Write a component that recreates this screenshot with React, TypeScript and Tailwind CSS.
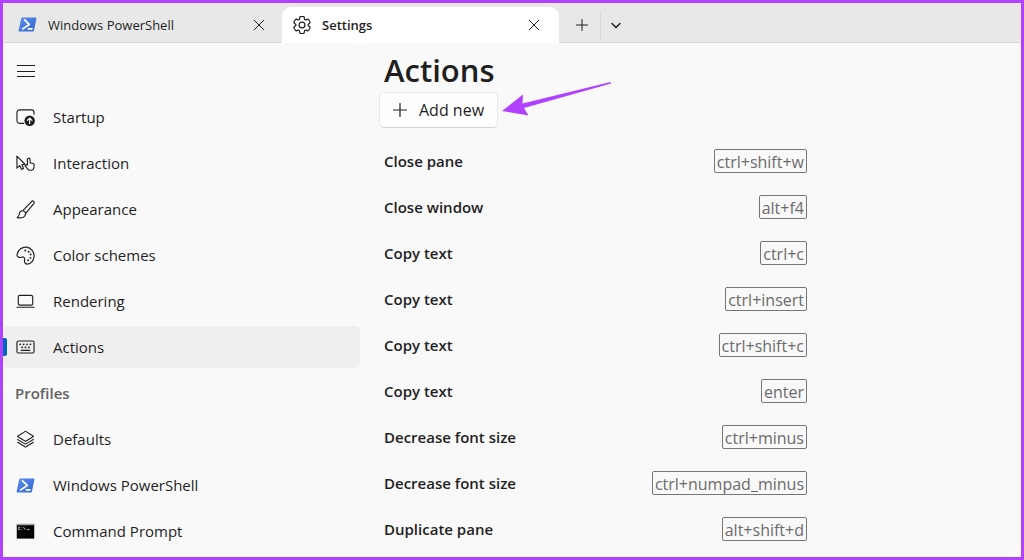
import React from "react";

type IconProps = { className?: string };

const line = {
  fill: "none",
  stroke: "currentColor",
  strokeWidth: 1.2,
  strokeLinecap: "round" as const,
  strokeLinejoin: "round" as const,
};

const GearIcon = ({ className }: IconProps) => (
  <svg viewBox="0 0 20 20" className={className} {...line} aria-hidden="true">
    <path d="M1.91 7.38A8.5 8.5 0 0 1 3.69 4.3a.5.5 0 0 1 .54-.13l1.92.68a1 1 0 0 0 1.32-.76l.36-2a.5.5 0 0 1 .4-.4 8.53 8.53 0 0 1 3.55 0c.2.04.35.2.38.4l.37 2a1 1 0 0 0 1.32.76l1.92-.68a.5.5 0 0 1 .54.13 8.5 8.5 0 0 1 1.78 3.08c.06.2 0 .4-.15.54l-1.56 1.32a1 1 0 0 0 0 1.52l1.56 1.32a.5.5 0 0 1 .15.54 8.5 8.5 0 0 1-1.78 3.08.5.5 0 0 1-.54.13l-1.92-.68a1 1 0 0 0-1.32.76l-.37 2a.5.5 0 0 1-.38.4 8.53 8.53 0 0 1-3.56 0 .5.5 0 0 1-.39-.4l-.36-2a1 1 0 0 0-1.32-.76l-1.92.68a.5.5 0 0 1-.54-.13 8.5 8.5 0 0 1-1.78-3.08.5.5 0 0 1 .15-.54l1.56-1.32a1 1 0 0 0 0-1.52L2.06 7.92a.5.5 0 0 1-.15-.54Z" />
    <circle cx="10" cy="10" r="2.9" />
  </svg>
);

const PowerShellIcon = ({ className }: IconProps) => (
  <svg viewBox="0 0 20 20" className={className} aria-hidden="true">
    <defs>
      <linearGradient id="ps" x1="0" y1="0" x2="1" y2="1">
        <stop offset="0" stopColor="#5a8df0" />
        <stop offset="1" stopColor="#3268cc" />
      </linearGradient>
    </defs>
    <path d="M4.600 2.600h14a.8.8 0 0 1 .8 1l-2.600 12.800a1.200 1.200 0 0 1-1.200 1H1.400a.8.8 0 0 1-.8-1L3.400 3.600a1.200 1.200 0 0 1 1.200-1Z" fill="url(#ps)" />
    <path d="M6.900 5.200l4.900 4.700-6.800 4.700M11 14.600h3.600" fill="none" stroke="#fff" strokeWidth="1.900" strokeLinecap="round" strokeLinejoin="round" />
  </svg>
);

const StartupIcon = ({ className }: IconProps) => (
  <svg viewBox="0 0 20 20" className={className} {...line} aria-hidden="true">
    <path d="M8 16.200H4A3 3 0 0 1 1 13.200V5a3 3 0 0 1 3-3h12a3 3 0 0 1 3 3v1.500" />
    <circle cx="14.400" cy="13.400" r="5.500" fill="currentColor" stroke="none" />
    <path d="M14.400 16.400v-5.600M12 13l2.400-2.400 2.400 2.400" stroke="#f9f9f9" strokeWidth="1.300" />
  </svg>
);

const InteractionIcon = ({ className }: IconProps) => (
  <svg viewBox="0 0 20 20" className={className} {...line} aria-hidden="true">
    <path d="M9.400 10.800 1 2.300v12.600l2.900-2.700 1.800 4 2.200-1-1.700-3.800Z" />
    <path d="M12 11.600V5.800a1.400 1.400 0 0 1 2.800 0v3.400l3 .8a1.900 1.900 0 0 1 1.400 2.100l-.5 2.700a2.800 2.800 0 0 1-2.700 2.300h-1.300a2.800 2.800 0 0 1-2.300-1.200l-2.900-3.300c.5-1.100 1.500-1.300 2.500-1Z" />
  </svg>
);

const BrushIcon = ({ className }: IconProps) => (
  <svg viewBox="0 0 20 20" className={className} {...line} aria-hidden="true">
    <path d="M7.200 11.300 16.300 1.600a1.600 1.600 0 0 1 2.400 2.200L10.200 14M7.200 11.300c1.700.3 2.700 1.300 3 2.700M7.200 11.300c-2-.2-3.400 1-3.700 3.200-.2 1.800-.9 3-2.200 4 3.800.9 8.500.4 8.900-4.500" />
  </svg>
);

const PaletteIcon = ({ className }: IconProps) => (
  <svg viewBox="0 0 20 20" className={className} {...line} aria-hidden="true">
    <path d="M1.200 8.600C2.300 3.700 6.500.8 11 1.200c5 .5 8.400 5 8 9.900-.4 4.500-3.300 8-7 8-2.200 0-3.300-1.700-3-3.600.3-1.900.4-3.300-1.200-3.900-1.400-.5-2.200.7-3.900.5-2-.2-3.100-1.700-2.700-3.500Z" />
    <g fill="currentColor" stroke="none">
      <circle cx="9.800" cy="4.700" r="1" />
      <circle cx="13.400" cy="6" r="1" />
      <circle cx="15.400" cy="9" r="1" />
      <circle cx="15.200" cy="12.500" r="1" />
      <circle cx="12.700" cy="15" r="1" />
    </g>
  </svg>
);

const LaptopIcon = ({ className }: IconProps) => (
  <svg viewBox="0 0 20 20" className={className} {...line} aria-hidden="true">
    <rect x="2.400" y="3.600" width="15.200" height="10.200" rx="1.800" />
    <path d="M1 16h18" />
  </svg>
);

const KeyboardIcon = ({ className }: IconProps) => (
  <svg viewBox="0 0 20 20" className={className} {...line} aria-hidden="true">
    <rect x="1" y="3.200" width="18" height="12.600" rx="1.600" />
    <path d="M5.500 13h9" />
    <g fill="currentColor" stroke="none">
      {[4.4, 8, 11.6, 15.2].map((x) => <circle key={x} cx={x} cy="6.700" r=".95" />)}
      {[6.4, 10, 13.6].map((x) => <circle key={x} cx={x} cy="9.900" r=".95" />)}
    </g>
  </svg>
);

const LayersIcon = ({ className }: IconProps) => (
  <svg viewBox="0 0 20 20" className={className} {...line} aria-hidden="true">
    <path d="M9.400 1.700 2 6.200c-.4.300-.4.700 0 1l7.400 4.400c.4.200.8.200 1.200 0L18 7.200c.4-.3.400-.7 0-1l-7.400-4.500a1.200 1.200 0 0 0-1.200 0Z" />
    <path d="M1.700 10l7.700 4.600c.4.200.8.200 1.200 0l7.700-4.600M1.700 13l7.700 4.700c.4.200.8.200 1.200 0l7.700-4.700" />
  </svg>
);

const CommandIcon = ({ className }: IconProps) => (
  <svg viewBox="0 0 20 20" className={className} aria-hidden="true">
    <path d="M.8 2h18.400v15.500H.8Z" fill="#050505" />
    <path d="M.8 2h18.400v1.400H.8Z" fill="#a8a8a8" />
    <path d="M4.500 5.500H2.800v2.400h1.700M6.300 5.600v.6M6.300 7.400v.6M8 5.500l1.500 2.500M11.500 8h2.800" fill="none" stroke="#d0d0d0" strokeWidth=".9" />
  </svg>
);

const CloseIcon = () => (
  <svg viewBox="0 0 12 12" className="size-3" {...line} strokeWidth={1} aria-hidden="true">
    <path d="M1.200 1.200l9.600 9.600M10.800 1.200l-9.600 9.600" />
  </svg>
);

const PlusIcon = ({ className }: IconProps) => (
  <svg viewBox="0 0 14 14" className={className} {...line} aria-hidden="true">
    <path d="M7 .5v13M.5 7h13" />
  </svg>
);

const settingsPages = [
  { label: "Startup", Icon: StartupIcon },
  { label: "Interaction", Icon: InteractionIcon },
  { label: "Appearance", Icon: BrushIcon },
  { label: "Color schemes", Icon: PaletteIcon },
  { label: "Rendering", Icon: LaptopIcon },
  { label: "Actions", Icon: KeyboardIcon },
];

const profiles = [
  { label: "Defaults", Icon: LayersIcon },
  { label: "Windows PowerShell", Icon: PowerShellIcon },
  { label: "Command Prompt", Icon: CommandIcon },
];

const bindings = [
  ["Close pane", "ctrl+shift+w"],
  ["Close window", "alt+f4"],
  ["Copy text", "ctrl+c"],
  ["Copy text", "ctrl+insert"],
  ["Copy text", "ctrl+shift+c"],
  ["Copy text", "enter"],
  ["Decrease font size", "ctrl+minus"],
  ["Decrease font size", "ctrl+numpad_minus"],
  ["Duplicate pane", "alt+shift+d"],
];

type NavItemProps = { label: string; Icon: React.ComponentType<IconProps>; active?: boolean };

const NavItem = ({ label, Icon, active }: NavItemProps) => (
  <li className="flex h-[46px] items-center">
    <a
      href="#"
      aria-current={active ? "page" : undefined}
      className={`relative flex h-[42px] w-full items-center gap-[18px] rounded-[5px] pl-[13px] ${active ? "bg-[#efefef]" : ""}`}
    >
      {active && <span className="absolute left-0 h-[18px] w-1 rounded-r-[2px] bg-[#0067c0]" />}
      <Icon className="size-[19px] shrink-0" />
      <span>{label}</span>
    </a>
  </li>
);

export default function App() {
  return (
    <div className="flex min-h-screen flex-col border-[3px] border-[#b042ff] bg-[#f9f9f9] font-['Open_Sans','Noto_Sans',sans-serif] text-[15px] leading-5 text-[#1f1f1f]">
      <header className="flex h-10 items-end bg-[#e8e8e8] text-[13px]">
        <div className="flex h-9 w-[279px] items-center border-b border-[#d8d8d8] pl-[15px] pr-[11px]">
          <PowerShellIcon className="size-[19px]" />
          <span className="ml-[11px] flex-1">Windows PowerShell</span>
          <button aria-label="Close Windows PowerShell" className="p-1.5"><CloseIcon /></button>
        </div>
        <div className="flex h-9 w-[277px] items-center rounded-t-[9px] bg-white pl-2.5 pr-[13px]">
          <GearIcon className="size-5" />
          <span className="ml-2.5 flex-1 font-semibold">Settings</span>
          <button aria-label="Close Settings" className="p-1.5"><CloseIcon /></button>
        </div>
        <div className="flex h-9 flex-1 items-center border-b border-[#d8d8d8] pl-[11px]">
          <button aria-label="New tab" className="p-1.5"><PlusIcon className="size-3" /></button>
          <span className="ml-1.5 h-7 w-px bg-[#d9d9d9]" />
          <button aria-label="Open tab menu" className="p-2">
            <svg viewBox="0 0 14 14" className="size-3.5" fill="none" stroke="currentColor" strokeWidth="1.500" strokeLinecap="round" strokeLinejoin="round" aria-hidden="true">
              <path d="M3 5.500 7 9.500l4-4" />
            </svg>
          </button>
        </div>
      </header>

      <div className="flex flex-1">
        <nav className="w-[357px] shrink-0 pt-[5px]">
          <button aria-label="Toggle navigation" className="flex h-[46px] items-center pl-3.5">
            <svg viewBox="0 0 18 14" className="h-3.5 w-[18px]" {...line} aria-hidden="true">
              <path d="M.5 1.500h17M.5 7.500h17M.5 12.500h17" />
            </svg>
          </button>
          <ul>
            {settingsPages.map((item) => (
              <NavItem key={item.label} {...item} active={item.label === "Actions"} />
            ))}
          </ul>
          <h2 className="flex h-[46px] items-center pl-3 font-semibold text-[#636363]">Profiles</h2>
          <ul>
            {profiles.map((item) => <NavItem key={item.label} {...item} />)}
          </ul>
        </nav>

        <main className="min-w-0 flex-1 pl-6 pt-[7px]">
          <h1 className="text-[31px] font-semibold leading-10">Actions</h1>
          <div className="-ml-[5px] mt-0.5 flex items-center">
            <button className="flex h-9 items-center gap-3 rounded-[5px] border border-[#e8e8e8] border-b-[#d4d4d4] bg-[#fefefe] px-[13px] text-base">
              <PlusIcon className="size-3.5" />
              Add new
            </button>
            <svg viewBox="0 0 110 36" className="-mt-5 ml-1 h-9 w-[110px]" fill="#b042ff" aria-hidden="true">
              <path d="M0 29 21 12.500 20.500 21.500 108.500 0 109 1.500 22 26 26.500 33.500Z" />
            </svg>
          </div>
          <dl className="mt-2.5 w-[423px]">
            {bindings.map(([name, keys], i) => (
              <div key={i} className="flex h-[46px] items-center justify-between">
                <dt className="font-semibold">{name}</dt>
                <dd>
                  <kbd className="block h-6 rounded-[2px] border border-[#767676] px-0.5 font-[inherit] text-base leading-6 text-[#6b6b6b]">{keys}</kbd>
                </dd>
              </div>
            ))}
          </dl>
        </main>
      </div>
    </div>
  );
}
